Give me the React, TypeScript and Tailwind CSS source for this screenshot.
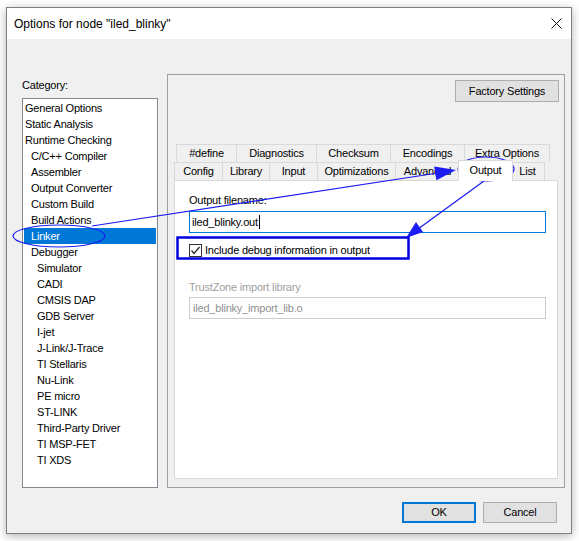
import React from "react";

const categories: [string, number][] = [
  ["General Options", 0],
  ["Static Analysis", 0],
  ["Runtime Checking", 0],
  ["C/C++ Compiler", 1],
  ["Assembler", 1],
  ["Output Converter", 1],
  ["Custom Build", 1],
  ["Build Actions", 1],
  ["Linker", 1],
  ["Debugger", 1],
  ["Simulator", 2],
  ["CADI", 2],
  ["CMSIS DAP", 2],
  ["GDB Server", 2],
  ["I-jet", 2],
  ["J-Link/J-Trace", 2],
  ["TI Stellaris", 2],
  ["Nu-Link", 2],
  ["PE micro", 2],
  ["ST-LINK", 2],
  ["Third-Party Driver", 2],
  ["TI MSP-FET", 2],
  ["TI XDS", 2],
];

const indent = ["pl-[1px]", "pl-[7px]", "pl-[13px]"];

const upperTabs: [string, string][] = [
  ["#define", "w-[61px]"],
  ["Diagnostics", "w-[81px]"],
  ["Checksum", "w-[75px]"],
  ["Encodings", "w-[75px]"],
  ["Extra Options", "w-[86px]"],
];

function Tab({ label, w, first }: { label: string; w: string; first?: boolean }) {
  return (
    <div
      className={`${w} ${first ? "" : "-ml-px"} h-[18px] border border-b-0 border-[#d9d9d9] bg-[#f0f0f0] flex items-center justify-center`}
    >
      {label}
    </div>
  );
}

function Annotations() {
  const c = "#1c1cf5";
  return (
    <svg className="absolute inset-0 pointer-events-none" width="579" height="541" viewBox="0 0 579 541">
      <ellipse cx="59" cy="236" rx="46" ry="11" fill="none" stroke={c} strokeWidth="1.2" />
      <line x1="92" y1="226" x2="438" y2="173" stroke={c} strokeWidth="1.2" />
      <polygon points="456,170 436.4,180.2 434.2,166.4" fill={c} />
      <ellipse cx="486" cy="169" rx="28" ry="12" fill="none" stroke={c} strokeWidth="1.2" />
      <line x1="484" y1="181" x2="418" y2="229" stroke={c} strokeWidth="1.2" />
      <polygon points="406,238 423,232 416,222" fill={c} />
      <rect x="177.5" y="237.5" width="231" height="21" fill="none" stroke="#0000e0" strokeWidth="2.5" />
    </svg>
  );
}

export default function App() {
  return (
    <div
      className="relative w-[579px] h-[541px] bg-white pt-[7px] pl-[6px] text-[11px] tracking-[-0.2px] text-black"
      style={{ fontFamily: '"Liberation Sans", Arial, sans-serif' }}
    >
      <div className="w-[566px] h-[527px] border border-[#7f7f7f] bg-[#f0f0f0] flex flex-col shadow-[0_2px_9px_rgba(0,0,0,0.3)]">
        {/* title bar */}
        <div className="h-[31px] bg-white flex items-center justify-between pl-[7px] pr-[9px] shrink-0">
          <span className="text-[12px] tracking-normal">Options for node "iled_blinky"</span>
          <svg width="11" height="11" viewBox="0 0 11 11">
            <path d="M0.5 0.5 L10.5 10.5 M10.5 0.5 L0.5 10.5" stroke="#111" strokeWidth="1" />
          </svg>
        </div>

        <div className="flex pl-[15px]">
          {/* category */}
          <div className="flex flex-col pt-[39px]">
            <div className="leading-[14px] h-[14px]">Category:</div>
            <div className="mt-[6px] w-[136px] h-[390px] border border-[#828790] bg-white pt-[1px] px-[1px] leading-[16px]">
              {categories.map(([name, lvl]) => (
                <div
                  key={name}
                  className={`h-[16px] ${indent[lvl]} ${name === "Linker" ? "bg-[#0078d7] text-white" : ""}`}
                >
                  {name}
                </div>
              ))}
            </div>
          </div>

          {/* options panel */}
          <div className="ml-[9px] mt-[35px] w-[398px] h-[414px] border border-[#a0a0a0] flex flex-col">
            <div className="flex justify-end pt-[5px] pr-[5px]">
              <button className="w-[104px] h-[22px] border border-[#adadad] bg-[#e1e1e1] flex items-center justify-center">
                Factory Settings
              </button>
            </div>

            <div className="mt-[42px] ml-[6px] w-[384px]">
              <div className="flex ml-[2px]">
                {upperTabs.map(([l, w], i) => (
                  <Tab key={l} label={l} w={w} first={i === 0} />
                ))}
              </div>
              <div className="flex items-end h-[18px]">
                <Tab label="Config" w="w-[49px]" first />
                <Tab label="Library" w="w-[48px]" />
                <Tab label="Input" w="w-[49px]" />
                <Tab label="Optimizations" w="w-[79px]" />
                <Tab label="Advanced" w="w-[65px]" />
                <div className="relative z-10 w-[55px] h-[21px] -mb-px -mx-[2px] border border-b-0 border-[#d9d9d9] bg-white flex items-center justify-center pb-[1px]">
                  Output
                </div>
                <Tab label="List" w="w-[35px]" />
              </div>
              <div className="h-[299px] border border-[#d9d9d9] bg-white px-[14px] pt-[12px]">
                <div className="leading-[14px]">Output filename:</div>
                <div className="mt-[4px] w-[357px] h-[22px] border border-[#0078d7] flex items-center pl-[2px]">
                  iled_blinky.out
                  <span className="inline-block w-px h-[14px] bg-black ml-px" />
                </div>
                <div className="mt-[11px] flex items-center gap-[3px] h-[13px]">
                  <div className="w-[13px] h-[13px] border border-[#333] bg-white flex items-center justify-center">
                    <svg width="11" height="11" viewBox="0 0 11 11">
                      <path d="M1.5 5.5 L4 8.5 L9.5 2" fill="none" stroke="#222" strokeWidth="1.2" />
                    </svg>
                  </div>
                  <span>Include debug information in output</span>
                </div>
                <div className="mt-[23px] leading-[14px] text-[#a0a0a0]">TrustZone import library</div>
                <div className="mt-[3px] w-[357px] h-[22px] border border-[#cccccc] flex items-center pl-[3px] text-[#909090]">
                  iled_blinky_import_lib.o
                </div>
              </div>
            </div>
          </div>
        </div>

        <div className="flex justify-end gap-[7px] pr-[14px] mt-[14px]">
          <button className="w-[74px] h-[21px] border-2 border-[#0078d7] bg-[#e1e1e1] flex items-center justify-center">
            OK
          </button>
          <button className="w-[74px] h-[21px] border border-[#adadad] bg-[#e1e1e1] flex items-center justify-center">
            Cancel
          </button>
        </div>
      </div>
      <Annotations />
    </div>
  );
}
